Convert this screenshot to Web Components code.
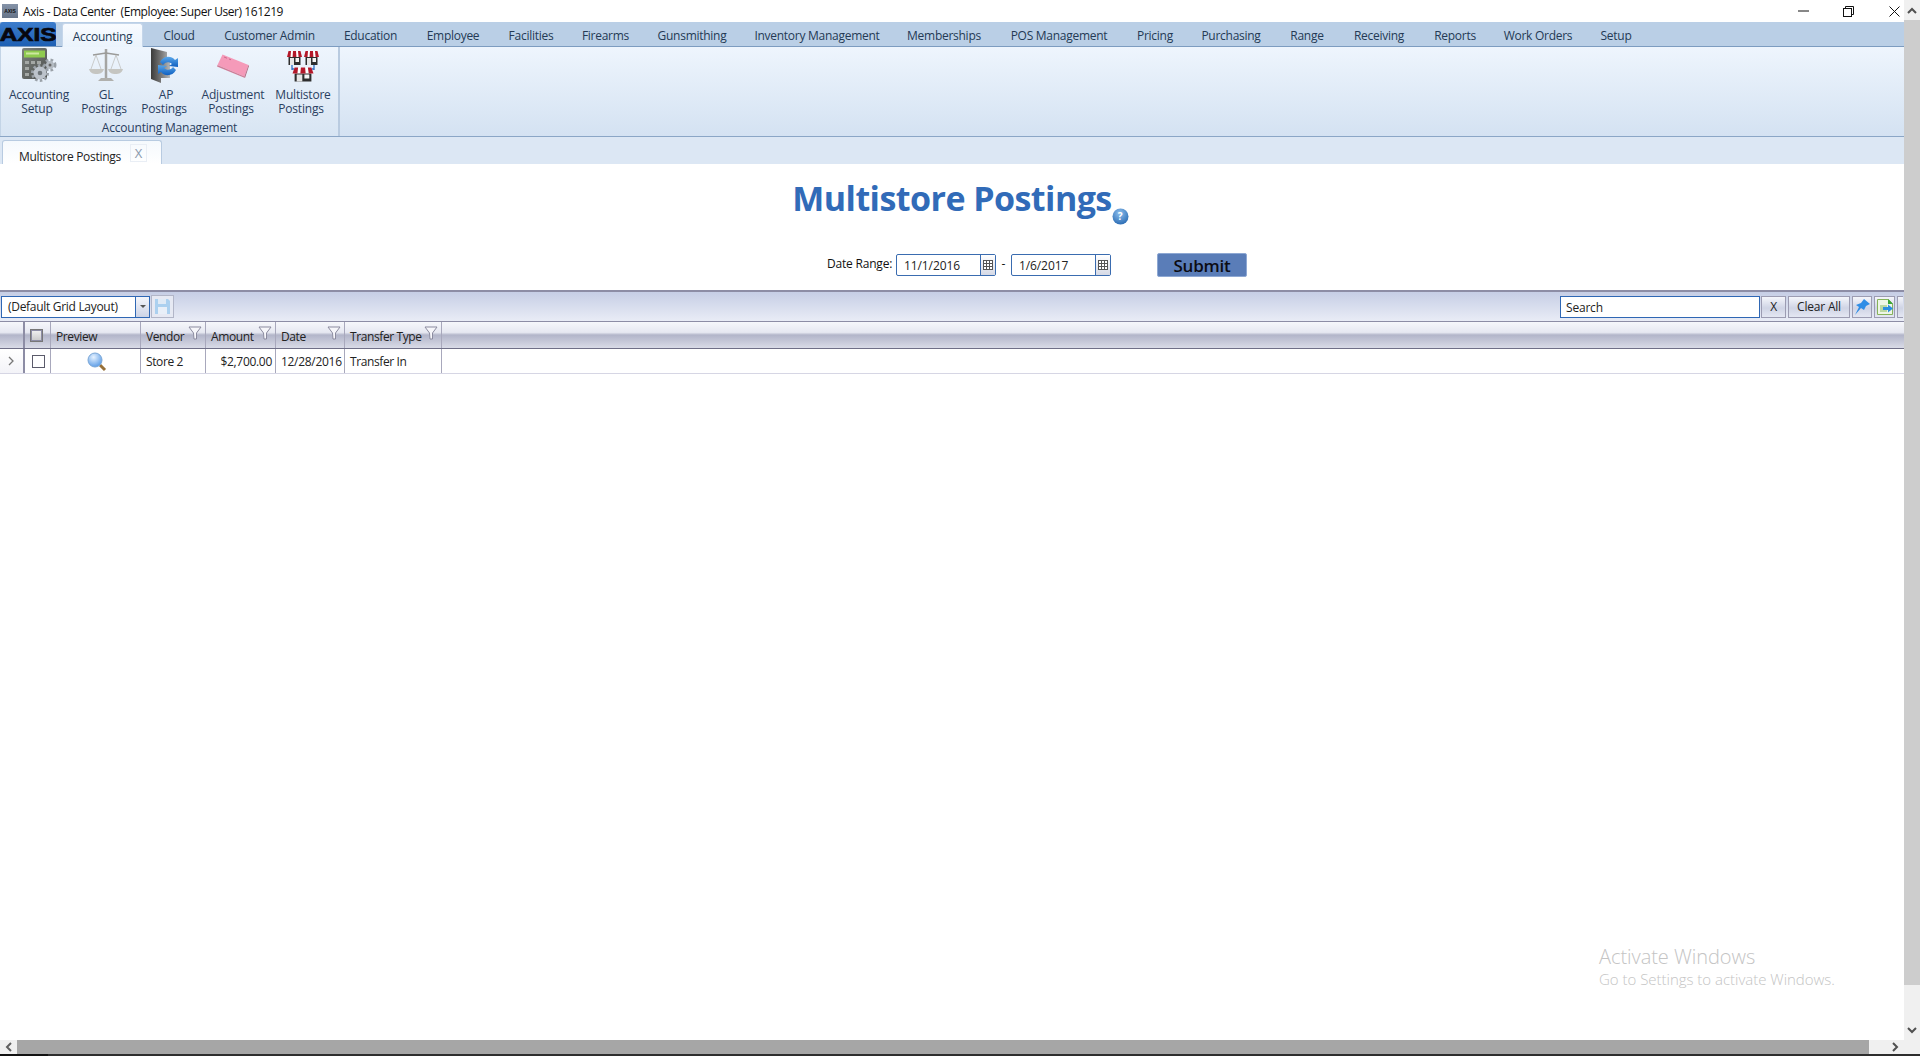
<!DOCTYPE html>
<html><head><meta charset="utf-8"><title>Axis - Data Center</title>
<style>
html,body{margin:0;height:100%;overflow:hidden;background:#fff}
body{font-family:"Open Sans","Noto Sans",sans-serif;font-size:12px;color:#1b1b1b}
axis-app{height:1056px}
</style></head><body>
<axis-app>
  <axis-titlebar>Axis - Data Center&nbsp; (Employee: Super User) 161219</axis-titlebar>
  <axis-menubar></axis-menubar>
  <axis-ribbon></axis-ribbon>
  <axis-doctabs></axis-doctabs>
  <axis-page></axis-page>
</axis-app>
<script>
const FONT='"Open Sans","Noto Sans",sans-serif';
function def(name,css,html,init){
  customElements.define(name,class extends HTMLElement{
    constructor(){super();const s=this.attachShadow({mode:'open'});s.innerHTML='<style>'+css+'</style>'+(typeof html==='function'?html(this):html);}
    connectedCallback(){if(init&&!this._i){this._i=1;init(this.shadowRoot,this);}}
  });
}
const ICONS={
 setup:`<svg width="40" height="38" viewBox="0 0 40 38"><defs><linearGradient id="c" x1="0" y1="0" x2="1" y2="1"><stop offset="0" stop-color="#7d827e"/><stop offset="1" stop-color="#4d504e"/></linearGradient></defs>
  <rect x="3" y="1" width="25" height="31" rx="2" fill="url(#c)"/><rect x="5" y="3.500" width="21" height="7" fill="#8fcb4f"/><rect x="7" y="5.500" width="13" height="2" fill="#cde8a0"/>
  <g fill="#a4a8a5"><rect x="6" y="14" width="4" height="3"/><rect x="12" y="14" width="4" height="3"/><rect x="18" y="14" width="4" height="3"/><rect x="6" y="20" width="4" height="3"/><rect x="6" y="26" width="4" height="3"/></g>
  <g stroke="#9aa1a8" stroke-width="3" stroke-dasharray="2.500 2.200" fill="none"><circle cx="21" cy="26" r="7.500"/><circle cx="31" cy="18" r="5"/></g><circle cx="21" cy="26" r="6.500" fill="#bcc3cb"/><circle cx="21" cy="26" r="2.300" fill="#6f767b"/><circle cx="31" cy="18" r="4" fill="#b3bac1"/><circle cx="31" cy="18" r="1.500" fill="#666"/></svg>`,
 gl:`<svg width="36" height="36" viewBox="0 0 36 36" fill="none"><path d="M18 1v30" stroke="#a5a5a3" stroke-width="2.500"/><path d="M5 7 18 5l13 2" stroke="#9b9b99" stroke-width="1.500"/><path d="M8 7 3 21M8 7l5 14M28 7l-5 14M28 7l5 14" stroke="#c0c0be" stroke-width=".8"/><path d="M1 21h15c-1 4-4 5-7.500 5S2 25 1 21zM20 21h15c-1 4-4 5-7.500 5S21 25 20 21z" fill="#c5c5c1"/><path d="M10 33h16l-3-3H13z" fill="#b0b0ad"/></svg>`,
 ap:`<svg width="38" height="38" viewBox="0 0 38 38"><defs><linearGradient id="d" x1="0" x2="1"><stop offset="0" stop-color="#3a3a3a"/><stop offset=".6" stop-color="#808080"/><stop offset="1" stop-color="#b5b8bb"/></linearGradient><linearGradient id="b" x1="0" y1="0" x2="0" y2="1"><stop offset="0" stop-color="#5aa7ea"/><stop offset="1" stop-color="#0f5fc0"/></linearGradient></defs>
  <path d="M4 1 20 5v6h3v20h-9v5L4 32z" fill="url(#d)"/><path d="M13 15c3-6 11-7 15-2l3-2v9l-9-1 3-2c-3-3-7-2-9 1z" fill="url(#b)"/><path d="M29 23c-3 6-11 7-15 2l-3 2v-9l9 1-3 2c3 3 7 2 9-1z" fill="url(#b)"/></svg>`,
 eraser:`<svg width="34" height="26" viewBox="0 0 34 26"><path d="M6.500 1.500 32.500 12l-4 11.500L1.500 12z" fill="#f59ab9"/><path d="M1.500 12l27 11.500.500 1.500L1 13.500z" fill="#cf7d97"/><path d="M32.500 12l-4 11.500.500 1.500 4-12z" fill="#b0687f"/><path d="M8 4l3 1.200M13 6l2 .8" stroke="#c05f80" stroke-width=".8"/></svg>`,
 stores:`<svg width="32" height="31" viewBox="0 0 32 31"><path d="M5 14v4h22v-4M5 18v1M27 18v1" stroke="#2f6fc4" fill="none" stroke-width="1.300"/>
  <g id="s"><rect x="1.500" y="1" width="12" height="13" fill="#2e2e2e"/><rect x="3" y="7" width="4" height="7" fill="#e6e6e6"/><rect x="8.500" y="7" width="3.500" height="4" fill="#f4f4f4"/>
   <path d="M1.500 0h12l1.500 6H0z" fill="#fff"/><path d="M1.500 0H4L3.500 6H0zM6 0h3l.4 6H5.600zM11 0h2.500L15 6h-3.400z" fill="#b3182a"/></g>
  <use href="#s" x="17"/><use href="#s" transform="translate(5.500 16.500) scale(1.400 1)"/></svg>`,
 lens:`<svg width="20" height="20" viewBox="0 0 20 20"><defs><radialGradient id="l" cx=".4" cy=".3" r=".8"><stop offset="0" stop-color="#e6f2ff"/><stop offset="1" stop-color="#4c93e4"/></radialGradient></defs><path d="M13 13l5 5" stroke="#96703a" stroke-width="3"/><circle cx="8" cy="8" r="7" fill="url(#l)" stroke="#7ba7d6"/></svg>`,
 filter:`<svg width="14" height="14" viewBox="0 0 14 14"><path d="M1 1h12L8.500 7v6H6l-.500-6z" fill="#f6f6fa" stroke="#8b8b9f"/></svg>`,
 cal:`<svg width="10" height="10" viewBox="0 0 10 10"><rect x=".500" y=".500" width="9" height="9" fill="#fff" stroke="#555"/><path d="M0 3.500h10M0 6.500h10M3.500 0v10M6.500 0v10" stroke="#555"/></svg>`,
 save:`<svg width="17" height="17" viewBox="0 0 17 17"><path d="M1 1h13l2 2v13H1z" fill="#8dc3ee"/><rect x="4" y="1" width="8" height="5" fill="#dcecf8"/><rect x="4" y="9" width="9" height="7" fill="#eaf3fb"/></svg>`,
 pin:`<svg width="18" height="18" viewBox="0 0 18 18"><path d="M11 1l6 5-4 2-2 4-3-2-6 7 4-8-3-2 5-2z" fill="#2e8de6"/></svg>`,
 exp:`<svg width="18" height="18" viewBox="0 0 18 18"><path d="M1.500 1.500h11l4 4v11h-15z" fill="#eef6e6" stroke="#86b35a"/><path d="M12 1l5 5h-5z" fill="#3aa53a"/><rect x="4" y="7" width="7" height="7" fill="#bcd9a2"/><path d="M7 9h5V6.500l5 4-5 4V12H7z" fill="#2b8fe0"/></svg>`,
 help:`<svg width="17" height="17" viewBox="0 0 17 17"><defs><radialGradient id="h" cx=".45" cy=".3" r=".8"><stop offset="0" stop-color="#8fc0ee"/><stop offset="1" stop-color="#1f62ad"/></radialGradient></defs><circle cx="8.500" cy="8.500" r="8" fill="url(#h)"/></svg>`
};
def('axis-app',':host{display:grid;grid-template-columns:1904px 16px;grid-template-rows:1040px 14px 2px;width:1920px;background:#fff;overflow:hidden}.m{display:flex;flex-direction:column;height:1040px;min-width:0;grid-column:1/3;grid-row:1}',
 '<div class="m"><slot></slot></div><axis-scrollbars></axis-scrollbars>');
def('axis-scrollbars',`:host{display:contents}
 .v{grid-column:2;grid-row:1;position:relative;z-index:3;background:#f0f0f0;display:flex;flex-direction:column;align-items:center}
 .v .a{height:20px;display:flex;align-items:center;justify-content:center}
 .v .t{height:965px;width:16px;background:#cdcdcd}.v .sp{flex:1}
 .h{grid-column:1/3;grid-row:2;background:#f0f0f0;display:flex;align-items:center}
 .h .a{width:17px;height:14px;display:flex;align-items:center;justify-content:center}
 .h .t{width:1852px;height:14px;background:#a6a6a6}.h .sp{flex:1}.c{width:16px;height:14px;background:#f0f0f0}
 .b{grid-column:1/3;grid-row:3;background:#2d2d2d;display:flex}.b i{display:block;width:48px;background:#111}
 svg{display:block}`,
 `<div class="v"><div class="a"><svg width="10" height="7"><path d="M1 6l4-4 4 4" stroke="#505050" stroke-width="2" fill="none"/></svg></div><div class="t"></div><div class="sp"></div><div class="a"><svg width="10" height="7"><path d="M1 1l4 4 4-4" stroke="#505050" stroke-width="2" fill="none"/></svg></div></div>
 <div class="h"><div class="a"><svg width="7" height="10"><path d="M6 1 2 5l4 4" stroke="#606060" stroke-width="2" fill="none"/></svg></div><div class="t"></div><div class="sp"></div><div class="a" style="width:18px"><svg width="7" height="10"><path d="M1 1l4 4-4 4" stroke="#505050" stroke-width="2" fill="none"/></svg></div><div class="c"></div></div>
 <div class="b"><i></i></div>`);
def('axis-titlebar',`:host{display:flex;align-items:center;height:22px;flex:none;background:#fff;font-size:12px;color:#111;position:relative}
 .ic{width:16px;height:14px;margin:0 5px 0 2px;background:linear-gradient(#8593a8,#667488);display:flex;align-items:center;justify-content:center;font:900 5px "Liberation Sans",sans-serif;color:#111}
 .sp{flex:1}.w{display:flex;width:134px;margin-right:3px;align-items:center}
 .w span{width:46px;display:flex;justify-content:center} svg{display:block}
 .t{white-space:pre;letter-spacing:-.42px}`,
 `<div class="ic">AXIS</div><div class="t"><slot></slot></div><div class="sp"></div>
 <div class="w"><span style="margin-left:-2px"><svg width="11" height="3"><path d="M0 1h11" stroke="#111"/></svg></span><span><svg width="11" height="11" fill="none" stroke="#111"><rect x=".5" y="2.500" width="8" height="8" fill="#fff"/><path d="M2.500 2.500v-2h8v8h-2"/></svg></span><span><svg width="11" height="11" stroke="#111"><path d="M.5.500l10 10M10.500.500l-10 10"/></svg></span></div>`);
const MENU=[['Cloud',62],['Customer Admin',119],['Education',83],['Employee',82],['Facilities',74],['Firearms',75],['Gunsmithing',98],['Inventory Management',152],['Memberships',102],['POS Management',128],['Pricing',64],['Purchasing',88],['Range',64],['Receiving',80],['Reports',72],['Work Orders',94],['Setup',62]];
def('axis-menubar',`:host{display:flex;height:25px;flex:none;background:#bacfe6;border-bottom:1px solid #7d9cc0;box-sizing:border-box;font-size:12px;color:#243a55}
 .logo{width:56px;height:24px;box-sizing:border-box;background:linear-gradient(#3d7dcc,#1d5fb3);border-radius:3px 3px 0 0;overflow:hidden;position:relative;display:flex;justify-content:center}
 .logo span{font:900 19px/26px "Liberation Sans",sans-serif;color:#07070f;-webkit-text-stroke:.7px #07070f;transform:scaleX(1.28);display:block}
 .tab{display:flex;align-items:center;justify-content:center;white-space:nowrap;letter-spacing:-.27px;flex:none;padding-top:2px;box-sizing:border-box}
 .on{background:linear-gradient(#f8fbff,#eaf3fc);width:81px;margin:1px 5px -1px 6px;height:25px;border-radius:3px 3px 0 0;border:1px solid #c5d6ea;border-bottom:0;padding-top:0}`,
 `<div class="logo"><span>AXIS</span></div><div class="tab on">Accounting</div>`+MENU.map(m=>`<div class="tab" style="width:${m[1]}px">${m[0]}</div>`).join(''));
const RB=[['Accounting','Setup','setup',76],['GL','Postings','gl',58],['AP','Postings','ap',62],['Adjustment','Postings','eraser',72],['Multistore','Postings','stores',68]];
def('axis-ribbon',`:host{display:flex;height:90px;flex:none;background:linear-gradient(#eef5fd,#d4e2f2);border-bottom:1px solid #8ba6c6;box-sizing:border-box;color:#2a4060;font-size:12px}
 .g{width:340px;box-sizing:border-box;border-right:2px solid #b9cbe0;border-left:1px solid #c3d4e6;display:flex;flex-direction:column;background:linear-gradient(#eef5fd,#d8e5f3)}
 .r{display:flex;height:72px}
 .l{text-align:center;line-height:14px;margin-top:2px;letter-spacing:-.2px}
 axis-rbtn{flex:none}`,
 `<div class="g"><div class="r">`+RB.map(b=>`<axis-rbtn style="width:${b[3]}px" data-a="${b[0]}" data-b="${b[1]}" data-i="${b[2]}"></axis-rbtn>`).join('')+`</div><div class="l">Accounting Management</div></div>`);
def('axis-rbtn',`:host{display:flex;flex-direction:column;align-items:center;line-height:14px;letter-spacing:-.2px;white-space:nowrap}
 .i{height:38px;margin-bottom:3px;display:flex;align-items:center;justify-content:center}svg{display:block}
 .two{padding-right:4px}`,
 `<div class="i"></div><div></div><div class="two"></div>`,
 (s,h)=>{s.querySelector('.i').innerHTML=ICONS[h.dataset.i];const d=s.querySelectorAll('div');d[1].textContent=h.dataset.a;d[2].textContent=h.dataset.b;});
def('axis-doctabs',`:host{display:flex;height:27px;flex:none;background:#dce7f4;padding:3px 0 0 2px;box-sizing:border-box}
 .t{width:160px;height:24px;box-sizing:border-box;border:1px solid #b8cbe1;border-bottom:0;border-radius:3px 3px 0 0;background:linear-gradient(#f5f9fd,#fff);display:flex;align-items:center;padding:7px 0 0 16px;font-size:12px;color:#222;letter-spacing:-.3px;white-space:nowrap;position:relative}
 .x{position:absolute;left:127px;top:3px;width:17px;height:18px;display:flex;align-items:center;justify-content:center;color:#8a99ad;border:1px solid #e9eef5;box-sizing:border-box;font-size:13px;letter-spacing:0}`,
 `<div class="t">Multistore Postings<span class="x">X</span></div>`);
def('axis-page',`:host{display:flex;flex-direction:column;flex:1;background:#fff;position:relative;width:1904px}
 .hd{text-align:center;height:89px;box-sizing:border-box;padding-top:11px}
 h1{margin:0;display:inline-block;position:relative;font:700 34px/46px "Open Sans","Noto Sans",sans-serif;color:#316bb8;letter-spacing:-.55px}
 h1 span{position:absolute;left:100%;margin-left:0;top:33px;width:17px;height:17px}
 h1 b{position:absolute;inset:0;font:700 10px/17px ${FONT};letter-spacing:0;color:#fff;text-align:center}
 h1 svg{display:block}
 axis-daterange{margin-bottom:13px}
 .aw{position:absolute;left:1599px;top:780px;color:#c4c4c4;pointer-events:none;font-weight:300}
 .aw div:first-child{font-size:20px;line-height:26px;letter-spacing:-.05px}.aw div:last-child{font-size:15px;line-height:18px;letter-spacing:-.02px}`,
 `<div class="hd"><h1>Multistore Postings<span>${ICONS.help}<b>?</b></span></h1></div>
 <axis-daterange></axis-daterange><axis-gridbar></axis-gridbar><axis-grid></axis-grid>
 <div class="aw"><div>Activate Windows</div><div>Go to Settings to activate Windows.</div></div>`);
def('axis-daterange',`:host{display:flex;align-items:center;height:24px;padding-left:827px;font-size:12px;color:#111;flex:none}
 .lb{width:69px;letter-spacing:-.2px;white-space:nowrap;margin-top:-3px}
 .in{width:100px;height:22px;box-sizing:border-box;border:1px solid #3a6cb0;border-radius:2px;display:flex;background:#fff}
 .in div:first-child{flex:1;padding-left:7px;line-height:21px;letter-spacing:-.1px;font-size:12px;color:#222}
 .in div:last-child{width:14px;border-left:1px solid #3a6cb0;background:linear-gradient(#fff,#d5d9e5);display:flex;align-items:center;justify-content:center}
 .d{width:15px;text-align:center;margin-top:-3px}
 .s{margin-left:46px;width:90px;height:24px;box-sizing:border-box;background:#5a7db8;border:1px solid #8ea8d3;border-radius:2px;text-align:center;font:600 17px/23px ${FONT};color:#0c0c12;letter-spacing:-.2px}`,
 `<div class="lb">Date Range:</div><div class="in"><div>11/1/2016</div><div>${ICONS.cal}</div></div><div class="d">-</div><div class="in"><div>1/6/2017</div><div>${ICONS.cal}</div></div><div class="s">Submit</div>`);
def('axis-gridbar',`:host{display:flex;align-items:center;height:32px;flex:none;box-sizing:border-box;border-top:2px solid #8d8da5;border-bottom:1px solid #8d8da5;background:linear-gradient(#c6cee5,#e9ecf6);font-size:12px;color:#222;padding-right:1px;position:relative}
 .cb{width:135px;margin-left:1px;height:22px;box-sizing:border-box;border:1px solid #2f67b4;background:#fff;padding-left:6px;line-height:20px;letter-spacing:-.3px;white-space:nowrap}
 .ar{width:14px;height:22px;box-sizing:border-box;border:1px solid #2f67b4;border-left:0;background:linear-gradient(#f5f6fb,#ccd3e6);display:flex;align-items:center;justify-content:center}
 .ar i{border:3px solid transparent;border-top:3px solid #555;border-bottom:0}
 .sv{width:23px;height:23px;margin-left:1px;box-sizing:border-box;border:1px solid #b2b6c8;background:#e6e9f3;display:flex;align-items:center;justify-content:center}
 .sv svg{opacity:.65}
 .sp{flex:1}
 .se{width:200px;height:22px;box-sizing:border-box;border:1px solid #2f67b4;background:#fff;padding-left:5px;line-height:22px;letter-spacing:-.2px;margin-right:1px}
 .b{height:22px;box-sizing:border-box;border:1px solid #9c9cb2;background:linear-gradient(#f5f6fb,#cfd4e5 55%,#e4e7f2);display:flex;align-items:center;justify-content:center;margin-left:2px;letter-spacing:-.2px;flex:none}
 .first{margin-left:0}
 .clip{width:6px;border-right:0}
 svg{display:block}`,
 `<div class="cb">(Default Grid Layout)</div><div class="ar"><i></i></div><div class="sv">${ICONS.save}</div><div class="sp"></div><div class="se">Search</div><div class="b first" style="width:25px">X</div><div class="b" style="width:62px">Clear All</div><div class="b" style="width:20px">${ICONS.pin}</div><div class="b" style="width:21px">${ICONS.exp}</div><div class="b clip"></div>`);
const COLS=[['Preview',90,0],['Vendor',65,1],['Amount',70,1],['Date',69,1],['Transfer Type',97,1]];
def('axis-grid',`:host{display:block;flex:none;font-size:12px;color:#222;letter-spacing:-.4px}
 .h,.r{display:flex}
 .h{height:27px;box-sizing:border-box;border-bottom:1px solid #6f6f87;background:linear-gradient(#f6f7fb 0,#e6e8f1 40%,#b2b5c9 50%,#d9dbe7 100%)}
 .r{height:25px;box-sizing:border-box;border-bottom:1px solid #d6d6e4}
 .c{box-sizing:border-box;border-right:1px solid #a8a8bc;display:flex;align-items:center;padding:1px 5px 0;position:relative;white-space:nowrap;flex:none}
 .h .c{padding-top:2px}
 .f{position:absolute;right:3px;top:4px}svg{display:block}
 .rh{width:25px;border-right:2px solid #8d8da5;padding:0;justify-content:center;color:#666;margin-right:1px}
 .h .rh{padding:0}
 .ck{width:25px;justify-content:center;padding:0}
 .h .ck{padding:0}
 .box{width:11px;height:11px;border:1px solid #5b5b6b;background:#fff}
 .hbox{width:9px;height:9px;border:1px solid #8d8da5;outline:1px solid #777;background:linear-gradient(#eee,#ccc);margin-right:4px}
 .n{justify-content:flex-end;padding-right:3px;letter-spacing:-.3px}.p{justify-content:center}.p svg{margin-left:3px}.dt{letter-spacing:-.3px}`,
 `<div class="h"><div class="c rh" style="background:none"></div><div class="c ck"><div class="hbox"></div></div>`+COLS.map(c=>`<div class="c" style="width:${c[1]}px">${c[0]}${c[2]?`<span class="f">${ICONS.filter}</span>`:''}</div>`).join('')+`</div>
 <div class="r"><div class="c rh" style="background:linear-gradient(#fff,#f3f3f8)"><svg width="7" height="10"><path d="M1 1l4 4-4 4" stroke="#777" stroke-width="1.300" fill="none"/></svg></div><div class="c ck"><div class="box"></div></div>
 <div class="c p" style="width:90px">${ICONS.lens}</div><div class="c" style="width:65px">Store 2</div><div class="c n" style="width:70px">$2,700.00</div><div class="c dt" style="width:69px">12/28/2016</div><div class="c" style="width:97px">Transfer In</div></div>`);
</script>
</body></html>
